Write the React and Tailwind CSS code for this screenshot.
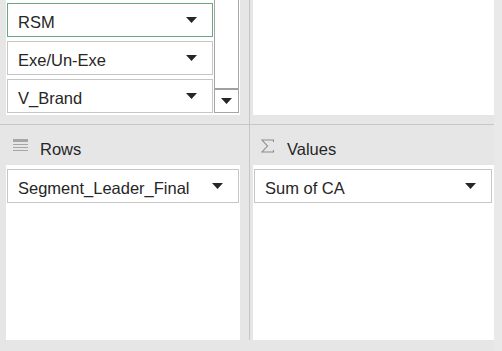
import React from 'react';

const Arrow = ({ className = '' }) => (
  <svg width="11" height="6" viewBox="0 0 11 6" className={className}>
    <polygon points="0,0 11,0 5.5,6" fill="#262626" />
  </svg>
);

const FieldBox = ({ label, active }) => (
  <div
    className={
      active
        ? 'h-[34px] flex items-center justify-between pl-[10px] pr-[15px] border border-[#6aa883] bg-white'
        : 'h-[34px] flex items-center justify-between pl-[10px] pr-[15px] border border-[#c6c6c6] bg-white'
    }
  >
    <span className="pt-[3px] leading-[20px] whitespace-nowrap">{label}</span>
    <Arrow />
  </div>
);

const RowsIcon = () => (
  <svg width="15" height="13" viewBox="0 0 15 13" className="mt-[14px] shrink-0">
    <rect x="0" y="0" width="15" height="3" fill="#a6a6a6" />
    <rect x="0" y="5" width="15" height="1" fill="#a6a6a6" />
    <rect x="0" y="8" width="15" height="1" fill="#a6a6a6" />
    <rect x="0" y="11" width="15" height="1" fill="#a6a6a6" />
  </svg>
);

const SigmaIcon = () => (
  <svg width="13" height="14" viewBox="0 0 13 14" className="mt-[14px] shrink-0">
    <path d="M12.5 3 V1 H1 L6.5 7 L1 13 H12.5 V11" fill="none" stroke="#8c8c8c" strokeWidth="1.1" />
  </svg>
);

export default function App() {
  return (
    <div className="w-[502px] h-[351px] bg-[#e6e6e6] flex font-['Liberation_Sans',Arial,sans-serif] text-[16.5px] text-[#262626] overflow-hidden">
      {/* left column: filters (cut) + rows */}
      <div className="w-[249px] flex flex-col">
        <div className="h-[124px] pl-[6px]">
          <div className="w-[234px] h-[115px] bg-white flex pl-[1px]">
            <div className="w-[206px] pt-[3px] flex flex-col gap-[4px]">
              <FieldBox label="RSM" active />
              <FieldBox label="Exe/Un-Exe" />
              <FieldBox label="V_Brand" />
            </div>
            <div className="ml-[1px] w-[25px] h-[113px] border-x border-b border-[#a6a6a6] flex flex-col">
              <div className="flex-1" />
              <div className="h-[24px] border-t-2 border-[#a0a0a0] flex items-center justify-center">
                <Arrow />
              </div>
            </div>
          </div>
        </div>
        <div className="h-px bg-[#c6c6c6]" />
        <div className="h-[40px] flex items-start pl-[13px]">
          <RowsIcon />
          <span className="ml-[12px] mt-[14px] leading-[20px]">Rows</span>
        </div>
        <div className="ml-[6px] w-[234px] h-[175px] bg-white pt-[4px] px-[1px]">
          <FieldBox label="Segment_Leader_Final" />
        </div>
      </div>

      <div className="w-px h-[340px] bg-[#c6c6c6]" />

      {/* right column: columns (cut) + values */}
      <div className="w-[244px] flex flex-col">
        <div className="h-[124px] pl-[3px]">
          <div className="w-[241px] h-[115px] bg-white" />
        </div>
        <div className="h-px bg-[#c6c6c6]" />
        <div className="h-[40px] flex items-start pl-[11px]">
          <SigmaIcon />
          <span className="ml-[13px] mt-[14px] leading-[20px]">Values</span>
        </div>
        <div className="ml-[3px] w-[241px] h-[175px] bg-white pt-[4px] pl-[1px] pr-[2px]">
          <FieldBox label="Sum of CA" />
        </div>
      </div>

      <div className="w-[8px] h-full bg-[#e9e9e9]" />
    </div>
  );
}
